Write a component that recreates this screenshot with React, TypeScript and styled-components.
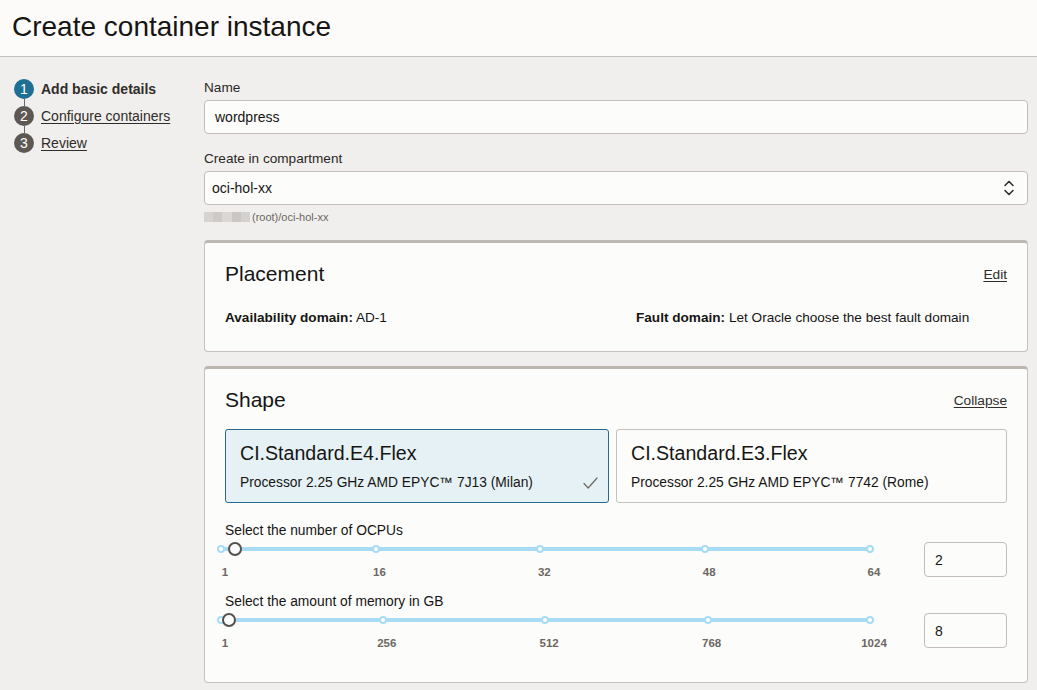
import React from "react";
import styled, { createGlobalStyle } from "styled-components";

const GlobalStyle = createGlobalStyle`
  html, body { margin: 0; padding: 0; }
  body {
    background: #f1efed;
    font-family: "Liberation Sans", Arial, Helvetica, sans-serif;
    color: #161513;
  }
  * { box-sizing: border-box; }
`;

const Header = styled.header`
  height: 57px;
  background: #fcfbfa;
  border-bottom: 1px solid #c4bfba;
  display: flex;
  align-items: center;
  padding: 0 0 2px 12px;
`;

const Title = styled.h1`
  margin: 0;
  font-size: 28px;
  font-weight: 400;
  color: #161513;
  letter-spacing: 0;
`;

const Body = styled.div`
  display: flex;
  padding: 22px 9px 0 14px;
`;

const Stepper = styled.ol`
  list-style: none;
  margin: 0;
  padding: 0;
  width: 190px;
  flex: 0 0 190px;
  display: flex;
  flex-direction: column;
  gap: 7px;
`;

const Step = styled.li`
  display: flex;
  align-items: center;
  gap: 7px;
  height: 20px;
`;

const StepCircle = styled.span<{ $active?: boolean; $last?: boolean }>`
  position: relative;
  width: 20px;
  height: 20px;
  border-radius: 50%;
  background: ${(p) => (p.$active ? "#1f6f95" : "#5d5853")};
  color: #fff;
  font-size: 14px;
  display: flex;
  align-items: center;
  justify-content: center;
  flex: 0 0 20px;
  &::after {
    content: "";
    display: ${(p) => (p.$last ? "none" : "block")};
    position: absolute;
    left: 9.5px;
    top: 20px;
    width: 1px;
    height: 7px;
    background: #6f6a65;
  }
`;

const StepLabel = styled.span<{ $active?: boolean }>`
  font-size: 14px;
  color: #2f2c29;
  font-weight: ${(p) => (p.$active ? 700 : 400)};
  text-decoration: ${(p) => (p.$active ? "none" : "underline")};
  text-underline-offset: 2px;
`;

const Main = styled.main`
  flex: 1;
  display: flex;
  flex-direction: column;
`;

const Label = styled.label<{ $top?: number }>`
  display: block;
  font-size: 13.6px;
  line-height: 18px;
  color: #2a2724;
  margin-top: ${(p) => p.$top ?? 0}px;
  margin-bottom: 3px;
`;

const TextInput = styled.div<{ $pad?: number }>`
  height: 34px;
  border: 1px solid #c3beb9;
  border-radius: 4px;
  background: #fcfcfb;
  display: flex;
  align-items: center;
  justify-content: space-between;
  padding: 0 12px 0 ${(p) => p.$pad ?? 10}px;
  font-size: 14px;
  color: #161513;
`;

const Breadcrumb = styled.div`
  margin-top: 5px;
  height: 14px;
  display: flex;
  align-items: center;
  font-size: 11px;
  color: #6b6661;
`;

const Blur = styled.span`
  display: inline-block;
  width: 46px;
  height: 10px;
  margin-right: 2px;
  background: linear-gradient(
    90deg,
    #d6d3d0 0 20%,
    #cdcac7 20% 40%,
    #dad7d4 40% 60%,
    #c9c6c3 60% 80%,
    #d4d1ce 80% 100%
  );
`;

const Card = styled.section<{ $top: number; $bottom: number }>`
  margin-top: ${(p) => p.$top}px;
  background: #fcfcfb;
  border: 1px solid #c6c1bc;
  border-top: 3px solid #bdb7b1;
  border-radius: 4px;
  padding: 19px 20px ${(p) => p.$bottom}px 20px;
`;

const CardHead = styled.div`
  display: flex;
  align-items: center;
  justify-content: space-between;
  height: 24px;
`;

const CardTitle = styled.h2`
  margin: 0;
  font-size: 21px;
  font-weight: 400;
  color: #161513;
`;

const LinkText = styled.a`
  font-size: 13.7px;
  color: #2f2c29;
  text-decoration: underline;
  text-underline-offset: 2px;
`;

const InfoRow = styled.div`
  margin-top: 24px;
  display: grid;
  grid-template-columns: 411px 1fr;
  font-size: 13.6px;
  line-height: 16px;
  color: #161513;
`;

const Tiles = styled.div`
  margin-top: 17px;
  display: grid;
  grid-template-columns: 384fr 391fr;
  gap: 7px;
`;

const Tile = styled.div<{ $selected?: boolean }>`
  height: 74px;
  border: 1px solid ${(p) => (p.$selected ? "#2b6a8c" : "#c6c1bc")};
  border-radius: 3px;
  background: ${(p) => (p.$selected ? "#e5f1f5" : "#fcfcfb")};
  padding: 12px 10px 11px 14px;
  display: flex;
  flex-direction: column;
  gap: 11px;
`;

const TileTitle = styled.div`
  font-size: 19.6px;
  line-height: 22px;
  color: #161513;
`;

const TileDesc = styled.div`
  font-size: 13.8px;
  line-height: 16px;
  color: #161513;
  display: flex;
  justify-content: space-between;
  align-items: center;
`;

const SliderRow = styled.div<{ $top: number }>`
  margin-top: ${(p) => p.$top}px;
  display: flex;
  align-items: flex-start;
`;

const SliderBlock = styled.div`
  flex: 0 0 660px;
  display: flex;
  flex-direction: column;
`;

const SliderLabel = styled.div`
  font-size: 13.8px;
  line-height: 16px;
  color: #161513;
`;

const TrackWrap = styled.div`
  position: relative;
  margin: 2px 0 0 -4px;
  width: 649px;
  height: 16px;
  display: flex;
  align-items: center;
`;

const TrackLine = styled.div`
  width: 100%;
  height: 4px;
  background: #a7dcf4;
  border-radius: 2px;
`;

const Tick = styled.span`
  position: absolute;
  top: 50%;
  width: 8px;
  height: 8px;
  margin: -4px 0 0 -4px;
  border-radius: 50%;
  background: #fff;
  border: 2px solid #a7dcf4;
`;

const Thumb = styled.span`
  position: absolute;
  top: 50%;
  width: 14px;
  height: 14px;
  margin: -7px 0 0 -7px;
  border-radius: 50%;
  background: #fcfcfb;
  border: 2px solid #55504b;
`;

const TickLabels = styled.div`
  position: relative;
  margin: 9px 0 0 -4px;
  width: 649px;
  height: 12px;
`;

const TickLabel = styled.span`
  position: absolute;
  top: 0;
  transform: translateX(-50%);
  font-size: 11.5px;
  line-height: 12px;
  font-weight: 700;
  color: #6c6762;
  white-space: nowrap;
`;

const NumBox = styled.div`
  margin: 19px 0 0 auto;
  width: 83px;
  height: 35px;
  border: 1px solid #c3beb9;
  border-radius: 4px;
  background: #fcfcfb;
  display: flex;
  align-items: center;
  padding-left: 10px;
  font-size: 14px;
  color: #161513;
`;

const SelectIcon = () => (
  <svg width="12" height="18" viewBox="0 0 12 18" fill="none">
    <path d="M2 6.5 L6 2.5 L10 6.5" stroke="#2a2724" strokeWidth="1.5" strokeLinecap="round" strokeLinejoin="round" />
    <path d="M2 11.5 L6 15.5 L10 11.5" stroke="#2a2724" strokeWidth="1.5" strokeLinecap="round" strokeLinejoin="round" />
  </svg>
);

const Check = () => (
  <svg width="15" height="13" viewBox="0 0 15 13" fill="none">
    <path d="M1 6.5 L5.2 11 L14 1" stroke="#6c6762" strokeWidth="1.2" strokeLinecap="round" strokeLinejoin="round" />
  </svg>
);

type SliderProps = {
  label: string;
  ticks: { label: string; pos: number }[];
  thumb: number;
  value: string;
  top: number;
};

const Slider = ({ label, ticks, thumb, value, top }: SliderProps) => (
  <SliderRow $top={top}>
    <SliderBlock>
      <SliderLabel>{label}</SliderLabel>
      <TrackWrap>
        <TrackLine />
        {ticks.map((t) => (
          <Tick key={t.label} style={{ left: `${t.pos * 100}%` }} />
        ))}
        <Thumb style={{ left: `${thumb * 100}%` }} />
      </TrackWrap>
      <TickLabels>
        {ticks.map((t) => (
          <TickLabel key={t.label} style={{ left: `calc(${t.pos * 100}% + 4px)` }}>
            {t.label}
          </TickLabel>
        ))}
      </TickLabels>
    </SliderBlock>
    <NumBox>{value}</NumBox>
  </SliderRow>
);

const ocpuTicks = [1, 16, 32, 48, 64].map((v) => ({ label: String(v), pos: (v - 1) / 63 }));
const memTicks = [1, 256, 512, 768, 1024].map((v) => ({ label: String(v), pos: (v - 1) / 1023 }));

export default function App() {
  return (
    <>
      <GlobalStyle />
      <Header>
        <Title>Create container instance</Title>
      </Header>
      <Body>
        <Stepper>
          <Step>
            <StepCircle $active>1</StepCircle>
            <StepLabel $active>Add basic details</StepLabel>
          </Step>
          <Step>
            <StepCircle>2</StepCircle>
            <StepLabel>Configure containers</StepLabel>
          </Step>
          <Step>
            <StepCircle $last>3</StepCircle>
            <StepLabel>Review</StepLabel>
          </Step>
        </Stepper>
        <Main>
          <Label>Name</Label>
          <TextInput>wordpress</TextInput>
          <Label $top={16}>Create in compartment</Label>
          <TextInput $pad={7}>
            <span>oci-hol-xx</span>
            <SelectIcon />
          </TextInput>
          <Breadcrumb>
            <Blur />
            (root)/oci-hol-xx
          </Breadcrumb>

          <Card $top={16} $bottom={25}>
            <CardHead>
              <CardTitle>Placement</CardTitle>
              <LinkText>Edit</LinkText>
            </CardHead>
            <InfoRow>
              <span>
                <b>Availability domain:</b> AD-1
              </span>
              <span>
                <b>Fault domain:</b> Let Oracle choose the best fault domain
              </span>
            </InfoRow>
          </Card>

          <Card $top={14} $bottom={33}>
            <CardHead>
              <CardTitle>Shape</CardTitle>
              <LinkText>Collapse</LinkText>
            </CardHead>
            <Tiles>
              <Tile $selected>
                <TileTitle>CI.Standard.E4.Flex</TileTitle>
                <TileDesc>
                  <span>Processor 2.25 GHz AMD EPYC™ 7J13 (Milan)</span>
                  <Check />
                </TileDesc>
              </Tile>
              <Tile>
                <TileTitle>CI.Standard.E3.Flex</TileTitle>
                <TileDesc>
                  <span>Processor 2.25 GHz AMD EPYC™ 7742 (Rome)</span>
                </TileDesc>
              </Tile>
            </Tiles>
            <Slider
              top={20}
              label="Select the number of OCPUs"
              ticks={ocpuTicks}
              thumb={14 / 649}
              value="2"
            />
            <Slider
              top={16}
              label="Select the amount of memory in GB"
              ticks={memTicks}
              thumb={8 / 649}
              value="8"
            />
          </Card>
        </Main>
      </Body>
    </>
  );
}
